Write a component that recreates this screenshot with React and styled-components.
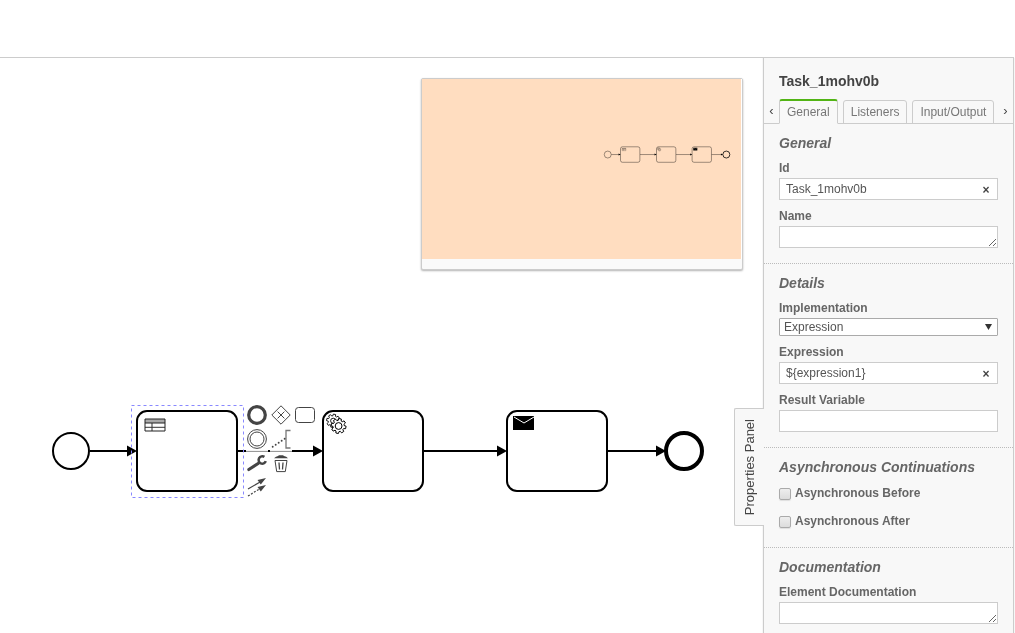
import React from 'react';
import styled, { createGlobalStyle, css } from 'styled-components';

const GlobalStyle = createGlobalStyle`
  *, *::before, *::after { box-sizing: border-box; }
  body {
    margin: 0;
    background: #fff;
    font: 12px/16px "Liberation Sans", Arial, sans-serif;
    color: #666;
  }
  button, input, select, textarea { font: inherit; margin: 0; }
`;

const Page = styled.div`
  min-height: 100vh;
  display: flex;
  flex-direction: column;
  padding-right: 1px;
`;

const TopBar = styled.header`
  height: 58px;
  flex: none;
  border-bottom: 1px solid #ccc;
`;

const Workspace = styled.main`
  flex: 1;
  display: flex;
`;

/* Canvas */

const Canvas = styled.section`
  position: relative;
  flex: 1;
  min-width: 0;
  overflow: hidden;
`;

const Drawing = styled.svg`
  position: absolute;
  inset: 0;
  width: 100%;
  height: 100%;
`;

const Minimap = styled.aside`
  position: absolute;
  top: 20px;
  right: 20px;
  width: 322px;
  height: 192px;
  border: 1px solid #ccc;
  border-radius: 2px;
  background: #fafafa;
  box-shadow: 0 1px 2px rgba(0, 0, 0, 0.3);
`;

const MinimapView = styled.svg`
  display: block;
  width: 100%;
  height: 180px;
  background: #fff;
`;

const Viewport = styled.rect`
  fill: #ffddc0;
  mix-blend-mode: multiply;
`;

const ContextPad = styled.div`
  position: absolute;
  top: 346px;
  left: 246px;
  display: grid;
  grid-template-columns: repeat(3, 22px);
  grid-auto-rows: 23px;
  gap: 1px 2px;
`;

const PadButton = styled.button`
  grid-column: ${(p) => p.$column};
  grid-row: ${(p) => p.$row};
  display: flex;
  padding: 0;
  border: 0;
  background: rgba(255, 255, 255, 0.95);
  box-shadow: 0 1px rgba(255, 255, 255, 0.6);
  color: #444;
  cursor: pointer;
`;

/* Properties panel */

const Panel = styled.aside`
  position: relative;
  flex: none;
  width: 251px;
  border: solid #ccc;
  border-width: 0 1px;
  background: #f8f8f8;
  box-shadow: 0 0 1px #ccc;
`;

const PanelToggle = styled.button`
  position: absolute;
  top: 350px;
  left: -30px;
  width: 30px;
  height: 118px;
  display: flex;
  align-items: center;
  justify-content: center;
  padding: 0;
  border: 1px solid #ccc;
  border-right: 0;
  border-radius: 2px 0 0 2px;
  background: #f8f8f8;
  color: #444;
  font-size: 13px;
  cursor: pointer;
`;

const ToggleText = styled.span`
  writing-mode: vertical-rl;
  transform: rotate(180deg);
  white-space: nowrap;
`;

const PanelTitle = styled.h1`
  margin: 0;
  padding: 14px 15px 9px;
  font-size: 14px;
  line-height: 18px;
  color: #444;
`;

const TabBar = styled.nav`
  display: flex;
  align-items: flex-end;
  height: 25px;
  border-bottom: 1px solid #ccc;
`;

const TabList = styled.div`
  flex: 1;
  display: flex;
  align-items: flex-end;
  gap: 5px;
`;

const Tab = styled.a`
  height: 24px;
  margin-bottom: -1px;
  padding: 0 7px;
  border: 1px solid #ccc;
  border-radius: 3px 3px 0 0;
  color: #777;
  line-height: 22px;
  text-decoration: none;
  white-space: nowrap;
  ${(p) =>
    p.$active &&
    css`
      height: 25px;
      border-top: 2px solid #52b415;
      border-bottom-color: #f8f8f8;
    `}
`;

const ScrollButton = styled.button`
  width: 15px;
  height: 24px;
  padding: 0;
  border: 0;
  background: none;
  color: #444;
  font-size: 13px;
  line-height: 22px;
`;

const Group = styled.section`
  display: flex;
  flex-direction: column;
  gap: 8px;
  padding: 10px 15px 15px;
  & + & { border-top: 1px dotted #bbb; }
`;

const GroupTitle = styled.h2`
  margin: 0;
  font-size: 14px;
  line-height: 18px;
  font-style: italic;
  color: #666;
`;

const FieldBox = styled.div`
  position: relative;
  display: flex;
  flex-direction: column;
  gap: 2px;
`;

const Label = styled.label`
  font-weight: bold;
  color: #666;
`;

const box = css`
  width: 100%;
  height: 22px;
  border: 1px solid #ccc;
  border-radius: 0;
  background: #fff;
  color: #555;
`;

const TextInput = styled.input`
  ${box}
  padding: 0 24px 1px 6px;
`;

const TextArea = styled.textarea`
  ${box}
  display: block;
  padding: 2px 6px;
  overflow: hidden;
  resize: vertical;
`;

const ClearButton = styled.button`
  position: absolute;
  right: 6px;
  bottom: 2px;
  width: 12px;
  height: 16px;
  padding: 0;
  border: 0;
  background: none;
  color: #444;
  font-weight: bold;
`;

const SelectWrap = styled.div`
  position: relative;
`;

const Select = styled.select`
  ${box}
  display: block;
  height: 18px;
  padding: 0 4px;
  border-color: #aaa;
  border-radius: 1px;
  appearance: none;
`;

const SelectArrow = styled.svg`
  position: absolute;
  top: 6px;
  right: 6px;
  width: 7px;
  height: 6px;
  fill: #333;
  pointer-events: none;
`;

const CheckRow = styled.div`
  display: flex;
  align-items: center;
  gap: 4px;
  height: 20px;
`;

const CheckBox = styled.input`
  appearance: none;
  width: 12px;
  height: 12px;
  border: 1px solid #aaa;
  border-radius: 2px;
  background: linear-gradient(#eee, #dcdcdc);
  box-shadow: 0 1px 1px rgba(0, 0, 0, 0.1);
`;

const CheckLabel = styled(Label)`
  padding-bottom: 2px;
`;

/* Diagram shapes */

const Flow = ({ from, to }) => (
  <g>
    <path d={`M${from} 393H${to - 2}`} stroke="#000" strokeWidth="2" fill="none" />
    <path d={`M${to - 10} 387.5L${to} 393L${to - 10} 398.5Z`} fill="#000" />
  </g>
);

const Task = ({ x, children }) => (
  <g transform={`translate(${x} 353)`}>
    <rect width="100" height="80" rx="10" fill="#fff" stroke="#000" strokeWidth="2" />
    {children}
  </g>
);

const gear = (cx, cy, outer, inner) => {
  const points = [];
  for (let i = 0; i < 8; i += 1) {
    [[-0.28, inner], [-0.17, outer], [0.17, outer], [0.28, inner]].forEach(([d, r]) => {
      const a = (i * Math.PI) / 4 + d + 0.2;
      points.push(`${(cx + r * Math.cos(a)).toFixed(2)} ${(cy + r * Math.sin(a)).toFixed(2)}`);
    });
  }
  return `M${points.join('L')}Z`;
};

const Diagram = () => (
  <g>
    <circle cx="71" cy="393" r="18" fill="#fff" stroke="#000" strokeWidth="2" />
    <Task x={137}>
      <rect x="8" y="8" width="20" height="4" fill="#aaa" />
      <path d="M8 16.3h20M15 12v8" fill="none" stroke="#333" />
      <path d="M8 8h20v12H8zM8 12h20" fill="none" stroke="#222" />
    </Task>
    <Task x={323}>
      <g fill="#fff" stroke="#000">
        <path d={gear(10.2, 9.8, 6.7, 5)} strokeWidth="0.9" />
        <circle cx="10.2" cy="9.8" r="2.6" strokeWidth="0.9" />
        <path d={gear(15.6, 15, 7.5, 5.6)} />
        <circle cx="15.6" cy="15" r="3.4" />
      </g>
    </Task>
    <Task x={507}>
      <rect x="6" y="5" width="21" height="14" />
      <path d="M7 6l10 6 10-6" fill="none" stroke="#fff" />
    </Task>
    <circle cx="684" cy="393" r="18" fill="#fff" stroke="#000" strokeWidth="4" />
    <Flow from={90} to={137} />
    <Flow from={238} to={323} />
    <Flow from={424} to={507} />
    <Flow from={608} to={666} />
  </g>
);

const padEntries = [
  { name: 'Append end event', column: 1, row: 1, art: <circle cx="11" cy="11" r="8.3" strokeWidth="3.2" /> },
  { name: 'Append gateway', column: 2, row: 1, art: <path d="M11 1.8L20.2 11 11 20.2 1.8 11zM7.6 7.6l6.8 6.8M14.4 7.6l-6.8 6.8" /> },
  { name: 'Append task', column: 3, row: 1, art: <rect x="1.5" y="3.5" width="19" height="15" rx="3" /> },
  { name: 'Append intermediate event', column: 1, row: 2, art: <><circle cx="11" cy="11" r="9.4" /><circle cx="11" cy="11" r="7" /></> },
  {
    name: 'Append text annotation',
    column: 2,
    row: 2,
    art: (
      <>
        <path d="M20.5 2.5H16v17.5h4.5" stroke="#777" strokeWidth="1.3" />
        <path d="M2.7 18.7L14.8 10.6" strokeWidth="1.9" strokeLinecap="round" strokeDasharray="0 3.6" />
      </>
    ),
  },
  {
    name: 'Change type',
    column: 1,
    row: 3,
    art: (
      <>
        <path d="M2.8 17.6L12.5 11.2" strokeWidth="3" strokeLinecap="round" />
        <path d="M18.4 4.9A3.7 3.7 0 1 0 19.800 9.200" strokeWidth="2.5" />
      </>
    ),
  },
  {
    name: 'Remove',
    column: 2,
    row: 3,
    art: (
      <>
        <path d="M4 6.300Q6 4.300 8 4.100L9 3.200h4l1 0.900Q16.500 4.300 18 6.300z" fill="currentColor" stroke="none" />
        <path d="M5 8.500h12L15.300 19.600H6.700z" />
        <path d="M9 10.500l.5 7M13 10.500l-.5 7" strokeWidth="1.3" />
      </>
    ),
  },
  {
    name: 'Connect',
    column: 1,
    row: 4,
    art: (
      <>
        <path d="M2 13L15 5.5" strokeWidth="1.2" />
        <path d="M2 20L15 12" strokeWidth="1.2" strokeDasharray="2 1.5" />
        <path d="M20 2L11.500 4 14.800 8.500zM20 9L11.500 11 14.800 15.500z" fill="currentColor" stroke="none" />
      </>
    ),
  },
];

const Field = ({ id, label, children }) => (
  <FieldBox>
    <Label htmlFor={id}>{label}</Label>
    {children}
  </FieldBox>
);

export default function App() {
  return (
    <Page>
      <GlobalStyle />
      <TopBar />
      <Workspace>
        <Canvas>
          <Drawing aria-label="Process diagram">
            <Diagram />
            <rect x="131.5" y="347.5" width="112" height="92" fill="none" stroke="#88f" strokeDasharray="3 3" />
          </Drawing>
          <ContextPad>
            {padEntries.map((e) => (
              <PadButton key={e.name} type="button" aria-label={e.name} $column={e.column} $row={e.row}>
                <svg width="22" height="22" fill="none" stroke="currentColor">{e.art}</svg>
              </PadButton>
            ))}
          </ContextPad>
          <Minimap aria-label="Minimap">
            <MinimapView viewBox="0 0 320 180">
              <g transform="translate(172 -0.5) scale(0.1935)"><Diagram /></g>
              <Viewport width="319" height="180" />
            </MinimapView>
          </Minimap>
        </Canvas>
        <Panel>
          <PanelToggle type="button"><ToggleText>Properties Panel</ToggleText></PanelToggle>
          <PanelTitle>Task_1mohv0b</PanelTitle>
          <TabBar>
            <ScrollButton type="button">‹</ScrollButton>
            <TabList>
              <Tab href="#general" $active>General</Tab>
              <Tab href="#listeners">Listeners</Tab>
              <Tab href="#io">Input/Output</Tab>
            </TabList>
            <ScrollButton type="button">›</ScrollButton>
          </TabBar>
          <Group>
            <GroupTitle>General</GroupTitle>
            <Field id="id" label="Id">
              <TextInput id="id" defaultValue="Task_1mohv0b" />
              <ClearButton type="button">×</ClearButton>
            </Field>
            <Field id="name" label="Name"><TextArea id="name" /></Field>
          </Group>
          <Group>
            <GroupTitle>Details</GroupTitle>
            <Field id="impl" label="Implementation">
              <SelectWrap>
                <Select id="impl"><option>Expression</option></Select>
                <SelectArrow viewBox="0 0 7 6"><path d="M0 0h7L3.5 6z" /></SelectArrow>
              </SelectWrap>
            </Field>
            <Field id="expr" label="Expression">
              <TextInput id="expr" defaultValue={'${expression1}'} />
              <ClearButton type="button">×</ClearButton>
            </Field>
            <Field id="result" label="Result Variable"><TextInput id="result" /></Field>
          </Group>
          <Group>
            <GroupTitle>Asynchronous Continuations</GroupTitle>
            <CheckRow><CheckBox type="checkbox" id="before" /><CheckLabel htmlFor="before">Asynchronous Before</CheckLabel></CheckRow>
            <CheckRow><CheckBox type="checkbox" id="after" /><CheckLabel htmlFor="after">Asynchronous After</CheckLabel></CheckRow>
          </Group>
          <Group>
            <GroupTitle>Documentation</GroupTitle>
            <Field id="docs" label="Element Documentation"><TextArea id="docs" /></Field>
          </Group>
        </Panel>
      </Workspace>
    </Page>
  );
}
